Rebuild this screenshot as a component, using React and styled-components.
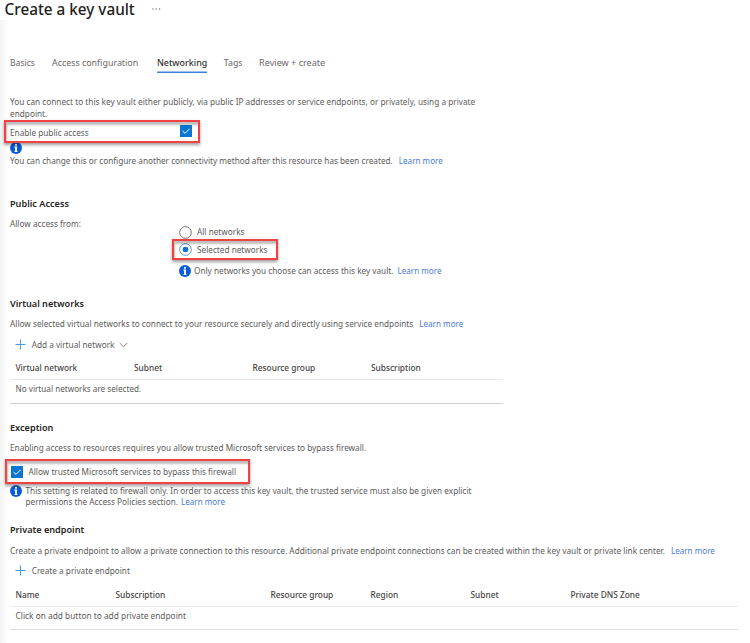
import React from "react";
import styled, { createGlobalStyle } from "styled-components";

const GlobalStyle = createGlobalStyle`
  * { box-sizing: border-box; }
  body { margin: 0; background: #fff; overflow: hidden; }
`;

const Page = styled.main`
  width: 750px;
  height: 643px;
  overflow: hidden;
  display: flex;
  flex-direction: column;
  background: linear-gradient(90deg, #f4f4f4, #fff 9px) 0 20px no-repeat, #fff;
  font-family: "Noto Sans", "Open Sans", sans-serif;
  font-size: 8.23px;
  line-height: 12px;
  color: #5c5b5a;
  white-space: nowrap;
`;

const TitleBar = styled.header`
  display: flex;
  align-items: center;
  gap: 17.5px;
  height: 18px;
  padding-left: 4.5px;
`;

const Title = styled.h1`
  margin: 0;
  font-size: 15.3px;
  line-height: 18px;
  font-weight: 500;
  color: #1f1e1d;
`;

const Tabs = styled.nav`
  display: flex;
  height: 21px;
  margin: 34px 0 23px 10px;
`;

const Tab = styled.a`
  height: 21px;
  margin-right: ${(p) => p.$gap || 0}px;
  font-size: ${(p) => p.$size || 9}px;
  line-height: ${(p) => p.$line || 21}px;
  font-weight: ${(p) => (p.$active ? 500 : 400)};
  color: ${(p) => (p.$active ? "#323130" : "#6a6968")};
  box-shadow: ${(p) => (p.$active ? "inset 0 -1.5px #3a80dc" : "none")};
`;

const Content = styled.div`
  display: flex;
  flex-direction: column;
  padding-left: 10px;
`;

const Paragraph = styled.p`
  margin: ${(p) => p.$top || 0}px 0 0;
  line-height: ${(p) => p.$line || 12}px;
  font-size: ${(p) => p.$size || 8.23}px;
`;

const Heading = styled.h2`
  margin: ${(p) => p.$top}px 0 0;
  padding-top: 1px;
  font-size: 9.13px;
  line-height: 12px;
  height: 12px;
  font-weight: 600;
  color: #252423;
`;

const Link = styled.a`
  margin-left: ${(p) => (p.$gap === undefined ? 6 : p.$gap)}px;
  font-size: 8.1px;
  color: #4b7bd6;
`;

const AccessRow = styled.div`
  position: relative;
  display: flex;
  align-items: center;
  height: 22px;
  margin-top: 1px;
`;

const AccessLabel = styled.label`
  width: 169.5px;
  padding-top: 4px;
`;

const Highlight = styled.span`
  position: absolute;
  left: ${(p) => p.$x}px;
  top: ${(p) => p.$y}px;
  width: ${(p) => p.$w}px;
  height: ${(p) => p.$h}px;
  border: 2px solid #f04242;
  box-shadow: 0 2px 3px rgba(0, 0, 0, 0.38), inset 1px 3px 2px rgba(0, 0, 0, 0.25);
  pointer-events: none;
`;

const IconSvg = styled.svg`
  display: block;
  flex: none;
`;

const InfoSlot = styled.div`
  height: 13px;
`;

const AccessGrid = styled.div`
  display: grid;
  grid-template-columns: 169px 1fr;
  margin-top: 9px;
`;

const Choices = styled.div`
  display: flex;
  flex-direction: column;
  padding-top: 5px;
`;

const Choice = styled.label`
  position: relative;
  display: flex;
  align-items: center;
  gap: 5px;
  height: ${(p) => p.$h}px;
`;

const Note = styled.div`
  display: flex;
  align-items: ${(p) => (p.$tall ? "flex-start" : "center")};
  gap: ${(p) => (p.$tall ? 3.5 : 3)}px;
  margin-top: ${(p) => p.$top}px;
  line-height: ${(p) => (p.$tall ? 11 : 12)}px;
`;

const Action = styled.button`
  display: flex;
  align-items: center;
  height: 13px;
  margin-top: ${(p) => p.$top}px;
  padding: 0 0 0 5px;
  border: 0;
  background: none;
  font: inherit;
  color: #5c5b5a;
`;

const ActionLabel = styled.span`
  margin: 0 5px 0 5.7px;
  padding-top: 1px;
`;

const Table = styled.div`
  width: ${(p) => p.$w}px;
  margin-top: ${(p) => p.$top}px;
  border-bottom: 1px solid ${(p) => p.$edge};
`;

const HeaderRow = styled.div`
  display: grid;
  grid-template-columns: ${(p) => p.$cols};
  align-items: center;
  height: 24px;
  padding-left: 5.5px;
  font-size: 8.34px;
  font-weight: 500;
  color: #454443;
  border-bottom: 1px solid #e9e9e9;
`;

const EmptyRow = styled.div`
  height: ${(p) => p.$h}px;
  padding-left: 5.5px;
  font-size: ${(p) => p.$size}px;
  line-height: 18px;
`;

const TrustRow = styled.label`
  position: relative;
  display: flex;
  align-items: center;
  gap: 5.5px;
  height: 24px;
  margin-top: 6px;
  padding-left: 1px;
`;

const InfoIcon = () => (
  <IconSvg width="12" height="12" viewBox="0 0 12 12">
    <circle cx="6" cy="6" r="6" fill="#0a5bd8" />
    <rect x="5" y="1.9" width="2" height="1.8" fill="#fff" />
    <path d="M4.3 4.6H7V9.2H7.6V10H4.4V9.2H5.1V5.5H4.3Z" fill="#fff" />
  </IconSvg>
);

const CheckIcon = () => (
  <IconSvg width="12" height="12" viewBox="0 0 12 12">
    <rect width="12" height="12" rx="0.5" fill="#0b76d2" />
    <path d="M2.6 6.1 5 8.4 9.6 3.8" fill="none" stroke="#fff" strokeWidth="1" />
  </IconSvg>
);

const RadioIcon = ({ on }) => (
  <IconSvg width="13" height="13" viewBox="0 0 13 13">
    <circle cx="6.5" cy="6.5" r="5.8" fill="#fff" stroke={on ? "#3d8bd9" : "#666"} strokeWidth="0.9" />
    {on && <circle cx="6.5" cy="6.5" r="2.8" fill="#0b70d0" />}
  </IconSvg>
);

const PlusIcon = () => (
  <IconSvg width="11" height="11" viewBox="0 0 11 11">
    <path d="M5.5 0.5V10.5M0.5 5.5H10.5" stroke="#4a9be3" strokeWidth="1.1" />
  </IconSvg>
);

const ChevronIcon = () => (
  <IconSvg width="9" height="6" viewBox="0 0 9 6">
    <path d="M0.7 1 4.5 4.8 8.3 1" fill="none" stroke="#777" strokeWidth="0.9" />
  </IconSvg>
);

const MoreIcon = () => (
  <IconSvg width="9" height="2" viewBox="0 0 9 2">
    <path d="M0.4 1H1.6M3.7 1H4.9M7 1H8.2" stroke="#555" strokeWidth="1.1" />
  </IconSvg>
);

const networkColumns = ["Virtual network", "Subnet", "Resource group", "Subscription"];
const endpointColumns = ["Name", "Subscription", "Resource group", "Region", "Subnet", "Private DNS Zone"];

export default function App() {
  return (
    <Page>
      <GlobalStyle />
      <TitleBar>
        <Title>Create a key vault</Title>
        <MoreIcon />
      </TitleBar>
      <Tabs>
        <Tab $gap={17} $size={8.6} $line={22}>Basics</Tab>
        <Tab $gap={18.7} $size={8.9}>Access configuration</Tab>
        <Tab $gap={16.5} $size={8.94} $active>Networking</Tab>
        <Tab $gap={16.5} $size={8.8} $line={22}>Tags</Tab>
        <Tab $size={9.1}>Review + create</Tab>
      </Tabs>
      <Content>
        <Paragraph $line={11.5} $size={8.25}>
          You can connect to this key vault either publicly, via public IP addresses or service endpoints, or privately, using a private
          <br />
          endpoint.
        </Paragraph>
        <AccessRow>
          <AccessLabel>Enable public access</AccessLabel>
          <CheckIcon />
          <Highlight $x={-6} $y={0} $w={196} $h={23} />
        </AccessRow>
        <InfoSlot>
          <InfoIcon />
        </InfoSlot>
        <Paragraph $size={8.21}>
          You can change this or configure another connectivity method after this resource has been created.
          <Link>Learn more</Link>
        </Paragraph>

        <Heading $top={30}>Public Access</Heading>
        <AccessGrid>
          <span>Allow access from:</span>
          <Choices>
            <Choice $h={18}>
              <RadioIcon />
              All networks
            </Choice>
            <Choice $h={17}>
              <RadioIcon on />
              Selected networks
              <Highlight $x={-7} $y={-2} $w={106} $h={21} />
            </Choice>
            <Note $top={7}>
              <InfoIcon />
              <span>
                Only networks you choose can access this key vault.
                <Link $gap={4}>Learn more</Link>
              </span>
            </Note>
          </Choices>
        </AccessGrid>

        <Heading $top={20}>Virtual networks</Heading>
        <Paragraph $top={9} $size={8.24}>
          Allow selected virtual networks to connect to your resource securely and directly using service endpoints
          <Link>Learn more</Link>
        </Paragraph>
        <Action $top={8}>
          <PlusIcon />
          <ActionLabel>Add a virtual network</ActionLabel>
          <ChevronIcon />
        </Action>
        <Table $w={492.5} $top={5} $edge="#cfcfcf">
          <HeaderRow $cols="118.5px 118.5px 118.5px 1fr">
            {networkColumns.map((name) => (
              <span key={name}>{name}</span>
            ))}
          </HeaderRow>
          <EmptyRow $h={23} $size={8.17}>No virtual networks are selected.</EmptyRow>
        </Table>

        <Heading $top={17}>Exception</Heading>
        <Paragraph $top={9}>
          Enabling access to resources requires you allow trusted Microsoft services to bypass firewall.
        </Paragraph>
        <TrustRow>
          <CheckIcon />
          Allow trusted Microsoft services to bypass this firewall
          <Highlight $x={-5} $y={-1} $w={245} $h={25} />
        </TrustRow>
        <Note $top={1} $tall>
          <InfoIcon />
          <span>
            This setting is related to firewall only. In order to access this key vault, the trusted service must also be given explicit
            <br />
            permissions the Access Policies section.
            <Link $gap={3}>Learn more</Link>
          </span>
        </Note>

        <Heading $top={16}>Private endpoint</Heading>
        <Paragraph $top={10} $size={8.27}>
          Create a private endpoint to allow a private connection to this resource. Additional private endpoint connections can be created within the key vault or private link center.
          <Link>Learn more</Link>
        </Paragraph>
        <Action $top={7}>
          <PlusIcon />
          <ActionLabel>Create a private endpoint</ActionLabel>
        </Action>
        <Table $w={728} $top={6} $edge="#dedede">
          <HeaderRow $cols="100px 155px 100px 100px 100px 1fr">
            {endpointColumns.map((name) => (
              <span key={name}>{name}</span>
            ))}
          </HeaderRow>
          <EmptyRow $h={22} $size={8.33}>Click on add button to add private endpoint</EmptyRow>
        </Table>
      </Content>
    </Page>
  );
}
